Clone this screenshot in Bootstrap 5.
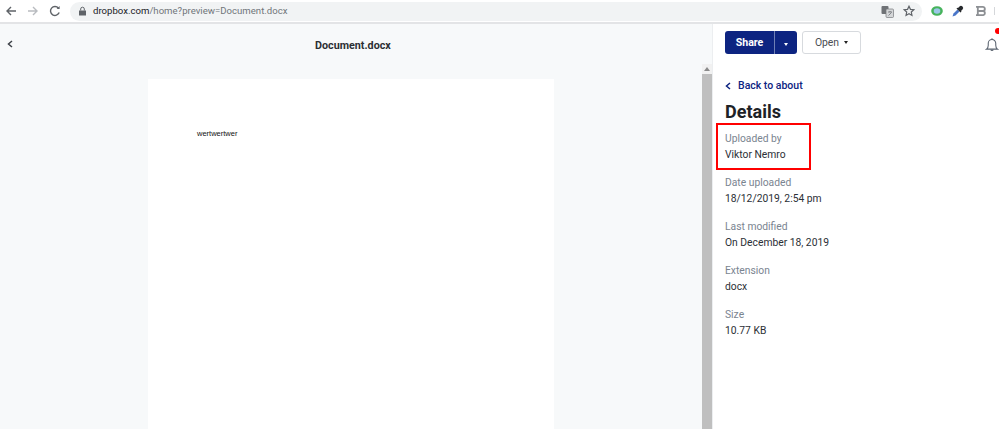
<!DOCTYPE html>
<html lang="en">
<head>
    <meta charset="UTF-8">
    <meta name="viewport" content="width=device-width, initial-scale=1.0">
    <title>Document.docx - Dropbox</title>
    <link href="https://cdn.jsdelivr.net/npm/bootstrap@5.3.1/dist/css/bootstrap.min.css" rel="stylesheet">
    <style>
        html, body { height: 429px; overflow: hidden; }
        body { font-family: Roboto, "Liberation Sans", sans-serif; background: #fff; color: #1e1919; }

        /* browser chrome */
        .chrome-bar { height: 24px; border-bottom: 2px solid #e3e4e6; background: #fff; }
        .chrome-btn { width: 22px; height: 22px; flex: none; }
        .url-pill { width: 852px; height: 19px; margin-left: 4px; border-radius: 10px; background: #f1f3f4; padding: 0 7px 0 8px; font-size: 9.6px; color: #70757a; flex: none; }
        .url-host { color: #202124; }
        .url-text { margin-left: 6px; }
        .star-icon { margin-left: 9px; }
        .ext-row { margin-left: 9px; gap: 8px; }
        .ext-bold { margin-left: 3px; }
        .ext-sep { width: 1px; height: 8px; background: #d5d7da; margin-left: -1px; }

        /* preview pane */
        .viewer { height: 405px; }
        .preview-pane { width: 713px; flex: none; background: #f7f9fa; border-right: 1px solid #eceef0; }
        .preview-head { height: 40px; padding: 0 7px; }
        .preview-title { font-size: 10.75px; font-weight: 700; color: #2b2e33; padding-top: 5px; margin-left: 302px; }
        .preview-body { padding-top: 15px; }
        .page-sheet { width: 406px; margin-left: 148px; background: #fff; padding: 49px 49px 0; font-family: "Liberation Sans", sans-serif; font-size: 7.5px; color: #111; }
        .fake-scroll { width: 10px; margin-left: 148px; margin-top: -15px; }
        .scroll-up { height: 10px; background: #f1f1f1; }
        .scroll-thumb { background: #bfbfbf; }

        /* details side */
        .side-pane { padding: 7px 11px 0 12px; min-width: 0; }
        .share-group { height: 23px; }
        .btn-share { background: #0d2481; border: 0; color: #fff; font-size: 10.6px; font-weight: 700; border-radius: 3px 0 0 3px; width: 49px; padding: 0; }
        .btn-caret { background: #0d2481; border: 0; border-left: 1px solid #6f7fb5; color: #fff; border-radius: 0 3px 3px 0; width: 23px; padding: 0; }
        .btn-open { background: #fff; border: 1px solid #d7dade; color: #4a4d52; font-size: 10.4px; border-radius: 3px; width: 59px; height: 23px; margin-left: 5px; padding: 0; }
        .caret-mark { display: inline-block; border: 2.5px solid transparent; border-top: 3px solid currentColor; border-bottom: 0; vertical-align: 2px; }
        .btn-open .caret-mark { margin-left: 5px; color: #222; }
        .bell-wrap { margin-left: auto; margin-top: 6px; margin-right: -11px; position: relative; width: 14px; height: 15px; }
        .bell-dot { position: absolute; top: -9px; right: -2px; width: 6px; height: 6px; border-radius: 50%; background: #f00; }
        .back-link { margin-top: 24px; font-size: 10.5px; font-weight: 500; color: #0d2481; text-decoration: none; line-height: 15px; }
        .back-link svg { margin-right: 7px; }
        .details-title { font-size: 18px; font-weight: 700; color: #1e2226; margin: 8px 0 0; line-height: 22px; }
        .detail-group { position: relative; margin-top: 12px; line-height: 16px; font-size: 10.3px; }
        .details-title + .detail-group { margin-top: 8px; }
        .detail-label { color: #7a8490; margin-bottom: 0; }
        .detail-value { color: #2b2f36; margin-top: 0; }
        .red-box { position: absolute; left: -9px; top: -8px; width: 95px; height: 47px; border: 2px solid #f00; }
    </style>
</head>
<body>

<header class="chrome-bar d-flex align-items-center">
    <div class="chrome-btn d-flex align-items-center justify-content-center">
        <svg width="12" height="12" viewBox="0 0 12 12" fill="none" stroke="#5f6368" stroke-width="1.4"><path d="M11 6H2M6 2 2 6l4 4"/></svg>
    </div>
    <div class="chrome-btn d-flex align-items-center justify-content-center">
        <svg width="12" height="12" viewBox="0 0 12 12" fill="none" stroke="#b9bcc0" stroke-width="1.4"><path d="M1 6h9M6 2l4 4-4 4"/></svg>
    </div>
    <div class="chrome-btn d-flex align-items-center justify-content-center">
        <svg width="12" height="12" viewBox="0 0 12 12" fill="none" stroke="#5f6368" stroke-width="1.4"><path d="M10.2 7.6A4.5 4.5 0 1 1 9.4 3"/><path d="M10.6 1v3H7.6z" fill="#5f6368" stroke="none"/></svg>
    </div>
    <div class="url-pill d-flex align-items-center">
        <svg width="9" height="10" viewBox="0 0 9 10"><path d="M1 4.5h7v5H1z" fill="#5f6368"/><path d="M2.7 4.5V3a1.8 1.8 0 0 1 3.6 0v1.5" fill="none" stroke="#5f6368"/></svg>
        <span class="url-text"><span class="url-host">dropbox.com</span>/home?preview=Document.docx</span>
        <svg class="ms-auto" width="13" height="13" viewBox="0 0 13 13"><rect x="0.5" y="1" width="7" height="8" rx="1" fill="#6f7276"/><rect x="5" y="4" width="7.5" height="8.5" rx="1" fill="#d4d6d8" stroke="#77797d" stroke-width=".7"/><path d="M7 7h4M9 6v1M7.5 10.500 10.500 7.500" stroke="#5f6368" stroke-width=".7"/></svg>
        <svg class="star-icon" width="12" height="12" viewBox="0 0 24 24" fill="none" stroke="#5f6368" stroke-width="2.400"><path d="m12 2.500 2.900 6.200 6.700.8-5 4.600 1.300 6.700L12 17.500l-5.900 3.300 1.300-6.700-5-4.600 6.700-.8z"/></svg>
    </div>
    <div class="ext-row d-flex align-items-center">
        <svg width="12" height="10" viewBox="0 0 12 10"><ellipse cx="6" cy="5" rx="5.800" ry="4.800" fill="#46b35c"/><ellipse cx="6" cy="5" rx="3.300" ry="2.800" fill="#9cc7e8"/></svg>
        <svg width="13" height="13" viewBox="0 0 13 13"><path d="m1.500 11.500 1-3 4-4 2 2-4 4z" fill="#4a76c9"/><path d="m7 3 1.500-1.500a1.500 1.500 0 0 1 3 3L10 6l.5.800-1 .7L5.500 3.500l.8-.8z" fill="#26292c"/></svg>
        <svg class="ext-bold" width="12" height="10" viewBox="0 0 13 11" fill="none" stroke="#8d9094" stroke-width="2"><path d="M1 1h7.500a2.200 2.200 0 0 1 0 4.500H3m0 0h6a2.300 2.300 0 0 1 0 4.500H1M3 1v9"/></svg>
        <span class="ext-sep"></span>
    </div>
</header>

<main class="viewer d-flex">
    <section class="preview-pane d-flex flex-column">
        <div class="preview-head d-flex align-items-center">
            <svg width="6" height="8" viewBox="0 0 6 8" fill="none" stroke="#3d4147" stroke-width="1.500"><path d="M5 1 1.500 4 5 7"/></svg>
            <div class="preview-title">Document.docx</div>
        </div>
        <div class="preview-body flex-grow-1 d-flex">
            <div class="page-sheet">wertwertwer</div>
            <div class="fake-scroll d-flex flex-column">
                <div class="scroll-up d-flex align-items-center justify-content-center">
                    <svg width="6" height="4" viewBox="0 0 6 4"><path d="M3 0 6 4H0z" fill="#8a8a8a"/></svg>
                </div>
                <div class="scroll-thumb flex-grow-1"></div>
            </div>
        </div>
    </section>

    <aside class="side-pane flex-grow-1 d-flex flex-column">
        <div class="d-flex">
            <div class="share-group d-flex">
                <button class="btn-share" type="button">Share</button>
                <button class="btn-caret" type="button"><span class="caret-mark"></span></button>
            </div>
            <button class="btn-open" type="button">Open<span class="caret-mark"></span></button>
            <div class="bell-wrap">
                <svg class="d-block" width="14" height="15" viewBox="0 0 16 18" fill="none" stroke="#5b6470" stroke-width="1.300"><path d="M1.500 14.500c1.500-1 2-2 2-4.500V7.500a4.500 4.500 0 0 1 9 0V10c0 2.500.5 3.500 2 4.500z"/><path d="M6.500 15a1.600 1.600 0 0 0 3 0M8 1.500V3"/></svg>
                <span class="bell-dot"></span>
            </div>
        </div>
        <a class="back-link d-flex align-items-center" href="#">
            <svg width="6" height="8" viewBox="0 0 6 8" fill="none" stroke="#0d2481" stroke-width="1.500"><path d="M5 1 1.500 4 5 7"/></svg>
            Back to about
        </a>
        <h2 class="details-title">Details</h2>
        <div class="detail-group">
            <div class="detail-label">Uploaded by</div>
            <div class="detail-value">Viktor Nemro</div>
            <span class="red-box"></span>
        </div>
        <div class="detail-group">
            <div class="detail-label">Date uploaded</div>
            <div class="detail-value">18/12/2019, 2:54 pm</div>
        </div>
        <div class="detail-group">
            <div class="detail-label">Last modified</div>
            <div class="detail-value">On December 18, 2019</div>
        </div>
        <div class="detail-group">
            <div class="detail-label">Extension</div>
            <div class="detail-value">docx</div>
        </div>
        <div class="detail-group">
            <div class="detail-label">Size</div>
            <div class="detail-value">10.77 KB</div>
        </div>
    </aside>
</main>

<script src="https://cdn.jsdelivr.net/npm/bootstrap@5.3.1/dist/js/bootstrap.bundle.min.js"></script>
</body>
</html>
